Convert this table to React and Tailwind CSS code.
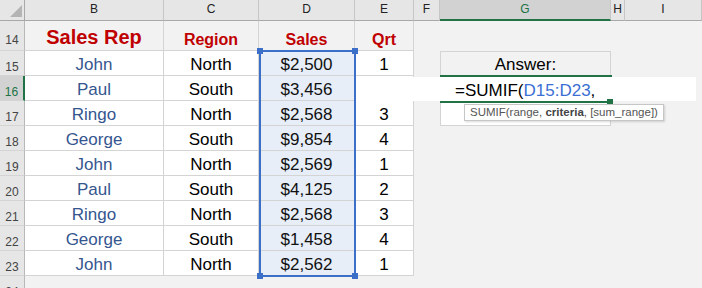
const letters = ["B", "C", "D", "E", "F", "G", "H", "I"];

const rows = [
  [15, "John", "North", "$2,500", "1"],
  [16, "Paul", "South", "$3,456", ""],
  [17, "Ringo", "North", "$2,568", "3"],
  [18, "George", "South", "$9,854", "4"],
  [19, "John", "North", "$2,569", "1"],
  [20, "Paul", "South", "$4,125", "2"],
  [21, "Ringo", "North", "$2,568", "3"],
  [22, "George", "South", "$1,458", "4"],
  [23, "John", "North", "$2,562", "1"],
];

const grid = "border-r border-b border-[#d4d4d4]";

function RowNum({ n, active, pb = "pb-0" }) {
  return (
    <div
      className={
        "flex items-end justify-center text-[12px] border-b border-[#d4d4d4] " +
        pb +
        (active
          ? " bg-[#d2d2d2] text-[#217346] border-r-2 border-r-[#217346]"
          : " bg-[#e6e6e6] text-[#444] border-r border-r-[#b8b8b8]")
      }
    >
      {n}
    </div>
  );
}

function Data({ children, className = "" }) {
  return (
    <div className={"flex items-end justify-center text-[17px] " + className}>
      {children}
    </div>
  );
}

export default function App() {
  return (
    <div
      className="relative w-[702px] h-[288px] overflow-hidden bg-[#f2f2f2] leading-[1.15]"
      style={{ fontFamily: '"Liberation Sans", Arial, sans-serif' }}
    >
      <div className="grid grid-cols-[25px_139px_95px_96px_59px_26px_171px_14px_1fr] grid-rows-[21px_30px_repeat(10,25px)]">
        {/* column headers */}
        <div className="relative bg-[#e6e6e6] border-r border-b border-[#a8a8a8]">
          <svg className="absolute left-[10px] top-[5px]" width="12" height="12" viewBox="0 0 12 12">
            <polygon points="12,0 12,12 0,12" fill="#b4b4b4" />
          </svg>
        </div>
        {letters.map((l) => (
          <div
            key={l}
            className={
              "flex items-center justify-center text-[12px] border-r border-r-[#c6c6c6] " +
              (l === "G"
                ? "bg-[#d2d2d2] text-[#217346] border-b-2 border-b-[#217346]"
                : "bg-[#e6e6e6] text-[#222] border-b border-b-[#a8a8a8]")
            }
          >
            {l}
          </div>
        ))}

        {/* row 14 */}
        <RowNum n={14} pb="pb-[2px]" />
        <div className={"flex items-end justify-center pb-[1px] text-[20px] font-bold text-[#c00000] " + grid}>
          Sales Rep
        </div>
        <div className={"flex items-end justify-center pb-[1px] text-[16px] font-bold text-[#c00000] " + grid}>
          Region
        </div>
        <div className={"flex items-end justify-center pb-[1px] text-[16px] font-bold text-[#c00000] " + grid}>
          Sales
        </div>
        <div className={"flex items-end justify-center pb-[1px] text-[16px] font-bold text-[#c00000] " + grid}>
          Qrt
        </div>
        <div />
        <div />
        <div />
        <div />

        {rows.map(([n, name, region, sales, qrt]) => (
          <div key={n} className="contents">
            <RowNum n={n} active={n === 16} />
            <Data className={"bg-white text-[#35568f] " + grid}>{name}</Data>
            <Data className={"bg-white text-black " + grid}>{region}</Data>
            <Data className={"bg-[#e7eef8] text-[#111] " + grid}>{sales}</Data>
            <Data className={"bg-white text-black " + grid}>{qrt}</Data>
            <div />
            {n === 15 ? (
              <Data className="border border-[#d4d4d4] text-black">Answer:</Data>
            ) : n === 17 ? (
              <div className="bg-white border-x border-b border-[#d4d4d4]" />
            ) : (
              <div />
            )}
            <div />
            <div />
          </div>
        ))}

        <RowNum n={24} />
      </div>

      {/* in-cell editor overflow */}
      <div className="absolute left-[356px] top-[77px] w-[340px] h-[24px] bg-white text-[17px] text-black pl-[99px] pt-[1px] leading-normal">
        =SUMIF(<span className="text-[#3b6fd4]">D15:D23</span>,
      </div>
      <div className="absolute left-[440px] top-[75px] w-[172px] h-[2px] bg-[#217346]" />
      <div className="absolute left-[440px] top-[101px] w-[168px] h-[2px] bg-[#217346]" />
      <div className="absolute left-[607px] top-[99px] w-[6px] h-[5px] bg-[#217346]" />

      {/* range highlight */}
      <div className="absolute left-[259px] top-[50px] w-[97px] h-[227px] border-2 border-[#3b6fc8]">
        <div className="absolute -left-[4px] -top-[4px] w-[6px] h-[6px] bg-[#3b6fc8]" />
        <div className="absolute -right-[4px] -top-[4px] w-[6px] h-[6px] bg-[#3b6fc8]" />
        <div className="absolute -left-[4px] -bottom-[4px] w-[6px] h-[6px] bg-[#3b6fc8]" />
        <div className="absolute -right-[4px] -bottom-[4px] w-[6px] h-[6px] bg-[#3b6fc8]" />
      </div>

      {/* function tooltip */}
      <div className="absolute left-[464px] top-[104px] h-[17px] bg-white border border-[#c6c6c6] shadow-[1px_1px_2px_rgba(0,0,0,0.15)] px-[5px] text-[11.5px] leading-[15px] text-[#555] whitespace-nowrap">
        SUMIF(range, <b className="text-[#444]">criteria</b>, [sum_range])
      </div>
    </div>
  );
}
